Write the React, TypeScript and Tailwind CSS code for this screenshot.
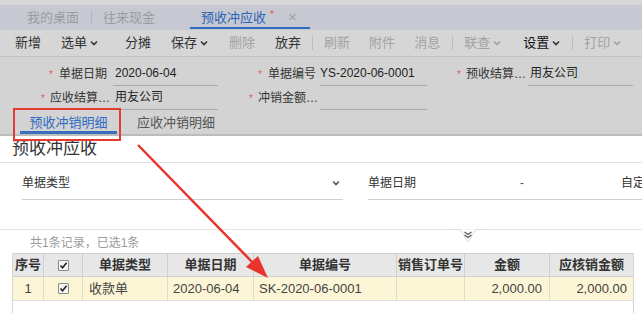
import React from "react";

const Chev = ({ c = "#333" }: { c?: string }) => (
  <svg width="8" height="6" viewBox="0 0 8 6" className="ml-[3px]">
    <path d="M1 1.5 L4 4.5 L7 1.5" fill="none" stroke={c} strokeWidth="1.6" />
  </svg>
);

const Check = () => (
  <div className="w-[11px] h-[11px] border border-[#8a8a8a] bg-[#f4f4f4] rounded-[1px] flex items-center justify-center">
    <svg width="9" height="9" viewBox="0 0 9 9">
      <path d="M1.5 4.5 L3.6 6.8 L7.6 1.8" fill="none" stroke="#222" strokeWidth="1.6" />
    </svg>
  </div>
);

const Tool = ({ t, gray, dd, dark }: { t: string; gray?: boolean; dd?: boolean; dark?: boolean }) => (
  <div className={`flex items-center ${gray ? "text-[#a3a3a3]" : dark ? "text-[#111]" : "text-[#333]"}`}>
    <span>{t}</span>
    {dd && <Chev c={gray ? "#a3a3a3" : "#333"} />}
  </div>
);

const Sep = () => <div className="w-px h-[14px] bg-[#bdbdbd]" />;

export default function App() {
  return (
    <div className="relative w-[642px] h-[314px] overflow-hidden bg-white font-['Liberation_Sans','Noto_Sans_CJK_SC',sans-serif] text-[12px] whitespace-nowrap">
      {/* top strip */}
      <div className="h-[5px] bg-[#d7d7d7]" />
      {/* tabs bar */}
      <div className="h-[25px] bg-[#c6c9d1] flex items-stretch text-[13px]">
        <div className="w-[91px] flex items-center justify-end pr-[12px] text-[#9a9da4]">我的桌面</div>
        <div className="w-px bg-[#b4b7be] my-[5px]" />
        <div className="w-[82px] flex items-center pl-[11px] text-[#9a9da4]">往来现金</div>
        <div className="w-[16px]" />
        <div className="w-[120px] relative flex items-center pl-[11px]">
          <span className="text-[#2d64b8]">预收冲应收</span>
          <span className="text-[#e05a5a] text-[10px] ml-[4px] -mt-[6px]">*</span>
          <span className="text-[#a0a3aa] ml-[14px] text-[15px]">×</span>
          <div className="absolute left-0 right-0 bottom-[1px] h-[2px] bg-[#2f6bc4]" />
        </div>
      </div>
      {/* toolbar */}
      <div className="h-[27px] bg-[#d6d6d6] flex items-center pl-[15px] text-[13px] border-b border-[#c4c4c4]">
        <Tool t="新增" />
        <div className="w-[20px]" />
        <Tool t="选单" dd />
        <div className="w-[27px]" />
        <Tool t="分摊" />
        <div className="w-[20px]" />
        <Tool t="保存" dd />
        <div className="w-[21px]" />
        <Tool t="删除" gray />
        <div className="w-[20px]" />
        <Tool t="放弃" />
        <div className="w-[11px]" />
        <Sep />
        <div className="w-[11px]" />
        <Tool t="刷新" gray />
        <div className="w-[19px]" />
        <Tool t="附件" gray />
        <div className="w-[19px]" />
        <Tool t="消息" gray />
        <div className="w-[12px]" />
        <Sep />
        <div className="w-[11px]" />
        <Tool t="联查" dd gray />
        <div className="w-[22px]" />
        <Tool t="设置" dd dark />
        <div className="w-[12px]" />
        <Sep />
        <div className="w-[11px]" />
        <Tool t="打印" dd gray />
      </div>
      {/* form */}
      <div className="bg-[#d3d3d3] h-[79px] relative flex flex-col">
        <div className="h-[29px] flex items-end">
          <div className="w-[113px] flex items-center justify-end pr-[6px] pb-[3px] text-[#333]">
            <span className="text-[#e06060] text-[10px] mr-[6px]">*</span>单据日期
          </div>
          <div className="w-[105px] border-b border-[#a9a9a9] pb-[3px] pl-[2px] text-[#222]">2020-06-04</div>
          <div className="w-[102px] flex items-center justify-end pr-[4px] pb-[3px] text-[#333]">
            <span className="text-[#e06060] text-[10px] mr-[6px]">*</span>单据编号
          </div>
          <div className="w-[107px] border-b border-[#a9a9a9] pb-[3px] text-[#222]">YS-2020-06-0001</div>
          <div className="w-[101px] flex items-center justify-end pr-[2px] pb-[3px] text-[#333]">
            <span className="text-[#e06060] text-[10px] mr-[5px]">*</span>预收结算…
          </div>
          <div className="w-[105px] border-b border-[#a9a9a9] pb-[3px] pl-[2px] text-[#222]">用友公司</div>
        </div>
        <div className="h-[24px] flex items-end">
          <div className="w-[113px] flex items-center justify-end pr-[3px] pb-[3px] text-[#333]">
            <span className="text-[#e06060] text-[10px] mr-[5px]">*</span>应收结算…
          </div>
          <div className="w-[105px] border-b border-[#a9a9a9] pb-[3px] pl-[2px] text-[#222]">用友公司</div>
          <div className="w-[102px] flex items-center justify-end pr-[2px] pb-[3px] text-[#333]">
            <span className="text-[#e06060] text-[10px] mr-[5px]">*</span>冲销金额…
          </div>
          <div className="w-[107px] border-b border-[#a9a9a9] pb-[3px]" />
        </div>
        <div className="h-[26px] flex items-stretch pl-[20px] text-[13px] border-b-2 border-[#bcbcbc]">
          <div className="w-[97px] relative flex items-center justify-center text-[#2f6bc4] pt-[2px]">
            预收冲销明细
            <div className="absolute left-0 right-0 bottom-[0px] h-[3px] bg-[#3a6fc0]" />
          </div>
          <div className="w-[20px]" />
          <div className="flex items-center text-[#555] pt-[2px]">应收冲销明细</div>
        </div>
      </div>
      {/* white panel */}
      <div className="h-[27px] flex items-center pl-[12px] text-[17px] text-[#333] border-b border-[#e2e2e2]">预收冲应收</div>
      <div className="h-[37px] flex items-end text-[#333]">
        <div className="ml-[22px] w-[321px] shrink-0 border-b border-[#cfcfcf] h-[33px] flex items-center justify-between pr-[3px]">
          <span>单据类型</span>
          <Chev c="#555" />
        </div>
        <div className="ml-[25px] w-[300px] shrink-0 border-b border-[#cfcfcf] h-[33px] flex items-center">
          <span>单据日期</span>
          <span className="ml-[104px] text-[#555]">-</span>
          <span className="ml-[97px]">自定义</span>
        </div>
      </div>
      {/* divider */}
      <div className="h-[33px] relative">
        <div className="absolute left-0 right-0 top-[29px] h-px bg-[#e4e4e4]" />
        <svg className="absolute left-[452px] top-[29px]" width="32" height="14" viewBox="0 0 32 14">
          <path d="M0 0.5 L8 0.5 L16 13 L24 0.5 L32 0.5" fill="white" stroke="#dcdcdc" strokeWidth="1" />
          <path d="M12.5 3 L16 5.5 L19.5 3 M12.5 6 L16 8.5 L19.5 6" fill="none" stroke="#555" strokeWidth="1.2" />
        </svg>
      </div>
      <div className="h-[20px] flex items-center pl-[30px] text-[#9a9a9a]">共1条记录，已选1条</div>
      {/* table */}
      <div className="mx-[12px] w-[622px] border-l border-r border-[#d6d6d6] h-[60px]">
        <div className="flex h-[24px] bg-[#e7e7e7] border-t border-b border-[#cfcfcf] font-bold text-[13px] text-[#333]">
          <div className="w-[31px] border-r border-[#cfcfcf] flex items-center justify-center">序号</div>
          <div className="w-[39px] border-r border-[#cfcfcf] flex items-center justify-center"><Check /></div>
          <div className="w-[85px] border-r border-[#cfcfcf] flex items-center justify-center">单据类型</div>
          <div className="w-[86px] border-r border-[#cfcfcf] flex items-center justify-center">单据日期</div>
          <div className="w-[143px] border-r border-[#cfcfcf] flex items-center justify-center">单据编号</div>
          <div className="w-[68px] border-r border-[#cfcfcf] flex items-center justify-center">销售订单号</div>
          <div className="w-[85px] border-r border-[#cfcfcf] flex items-center justify-center">金额</div>
          <div className="flex-1 flex items-center justify-center">应核销金额</div>
        </div>
        <div className="flex h-[24px] bg-[#fcf6d6] border-b border-[#dedede] text-[13px] text-[#444]">
          <div className="w-[31px] border-r border-[#e2dcc0] flex items-center justify-center">1</div>
          <div className="w-[39px] border-r border-[#e2dcc0] flex items-center justify-center"><Check /></div>
          <div className="w-[85px] border-r border-[#e2dcc0] flex items-center pl-[6px]">收款单</div>
          <div className="w-[86px] border-r border-[#e2dcc0] flex items-center pl-[5px]">2020-06-04</div>
          <div className="w-[143px] border-r border-[#e2dcc0] flex items-center pl-[5px]">SK-2020-06-0001</div>
          <div className="w-[68px] border-r border-[#e2dcc0]" />
          <div className="w-[85px] border-r border-[#e2dcc0] flex items-center justify-end pr-[7px]">2,000.00</div>
          <div className="flex-1 flex items-center justify-end pr-[6px]">2,000.00</div>
        </div>
      </div>
      {/* annotations */}
      <div className="absolute left-[13px] top-[108px] w-[108px] h-[33px] border-2 border-[#e53a32]" />
      <svg className="absolute left-0 top-0 pointer-events-none" width="642" height="314">
        <line x1="138" y1="145" x2="256" y2="266" stroke="#e8342c" strokeWidth="2.5" />
        <polygon points="268,278 246,267 258,256" fill="#e8342c" />
      </svg>
    </div>
  );
}
